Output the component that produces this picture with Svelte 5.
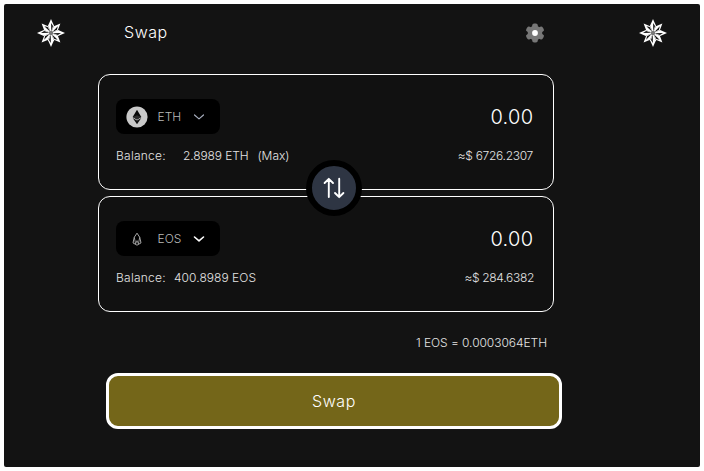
<script>
  const cards = [
    { token: 'ETH', balance: '2.8989 ETH', max: true, amount: '0.00', value: '≈$ 6726.2307' },
    { token: 'EOS', balance: '400.8989 EOS', max: false, amount: '0.00', value: '≈$ 284.6382' }
  ];
  const rays = [0, 45, 90, 135, 180, 225, 270, 315];
  const teeth = [0, 60, 120, 180, 240, 300];
</script>

{#snippet star()}
  <svg class="star" width="28" height="28" viewBox="-14 -14 28 28">
    {#each rays as angle, i}
      <g transform="rotate({angle}) scale({i % 2 ? 0.95 : 1})">
        <path d="M0-14L3-7.2L0 0L-3-7.2Z" fill="#fff" />
        <path d="M.1-10L2-6.9L.3-1.5Z" fill="#131313" />
      </g>
    {/each}
    <circle r="2.2" fill="#777" />
  </svg>
{/snippet}

<main class="app">
  <header>
    {@render star()}
    <h1>Swap</h1>
    <svg class="gear" width="20" height="20" viewBox="-10 -10 20 20">
      <g fill="#777">
        <circle r="7.3" />
        {#each teeth as angle}
          <rect x="-2.8" y="-9.5" width="5.6" height="6" rx="1.9" transform="rotate({angle})" />
        {/each}
      </g>
      <circle r="2.9" fill="#fff" />
    </svg>
    {@render star()}
  </header>

  <section class="cards">
    {#each cards as card}
      <article class="card">
        <div class="row top">
          <button class="token {card.token.toLowerCase()}">
            {#if card.token === 'ETH'}
              <svg width="22" height="22" viewBox="0 0 22 22">
                <circle cx="11" cy="11" r="10.6" fill="#c9c9c9" />
                <path d="M11 3.7L15.3 11L11 13.6L6.7 11Z" fill="#080808" />
                <path d="M11 9.2L15.3 11L11 13.6L6.7 11Z" fill="#2c2c2c" />
                <path d="M6.7 12L11 14.5L15.3 12L11 18.2Z" fill="#111" />
              </svg>
            {:else}
              <svg width="22" height="22" viewBox="0 0 22 22" fill="none" stroke="#c4c4c4" stroke-width=".85" stroke-linejoin="round">
                <path d="M11 5.2L8.3 9.2L7 14.9L11 17.2L15 14.9L13.7 9.2Z" />
                <path d="M8.3 9.4L9.6 15.8L11 12.6L12.4 15.8L13.7 9.4" stroke-width=".7" />
              </svg>
            {/if}
            <span>{card.token}</span>
            <svg class="chevron" width="12" height="8" viewBox="0 0 12 8" fill="none">
              <path d="M1.5 2L6 5.9L10.5 2" />
            </svg>
          </button>
          <span class="amount">{card.amount}</span>
        </div>
        <div class="row bottom">
          <span class="label">Balance:</span>
          <span class="balance" class:wide={card.max}>{card.balance}</span>
          {#if card.max}<span class="max">(Max)</span>{/if}
          <span class="value" class:short={!card.max}>{card.value}</span>
        </div>
      </article>
    {/each}
    <button class="flip" aria-label="Switch tokens">
      <svg width="44" height="44" viewBox="0 0 44 44" fill="none" stroke="#fff" stroke-width="1.9" stroke-linecap="round" stroke-linejoin="round">
        <path d="M16.8 31V13M12.6 17L16.8 12.8L21 17M27.2 12.8V31M23 27L27.2 31.2L31.4 27" />
      </svg>
    </button>
  </section>

  <p class="rate">1 EOS = 0.0003064ETH</p>
  <button class="submit"><span>Swap</span></button>
</main>

<style>
  :global(body) { margin: 0; background: #fff; }
  .app {
    box-sizing: border-box;
    width: 696px;
    height: 463px;
    margin: 4px;
    overflow: hidden;
    border-radius: 2px;
    background: #131313;
    color: #fff;
    font-family: Inter, "Liberation Sans", sans-serif;
    font-weight: 300;
  }
  button {
    box-sizing: border-box;
    margin: 0;
    padding: 0;
    border: 0;
    color: inherit;
    font: inherit;
  }
  svg { display: block; flex: none; }
  header {
    display: flex;
    align-items: center;
    height: 58px;
    padding: 0 33px 0 32.5px;
  }
  h1 {
    flex: 1;
    margin: -2px 0 0 59.5px;
    font-size: 16px;
    line-height: 20px;
    font-weight: 300;
    letter-spacing: .55px;
  }
  .gear { margin-right: 94.5px; }
  .cards {
    position: relative;
    display: flex;
    flex-direction: column;
    gap: 6px;
    width: 456px;
    margin: 12px 0 0 94px;
  }
  .card {
    box-sizing: border-box;
    height: 116px;
    padding: 24px 20px 0 17px;
    border: 1px solid #fff;
    border-radius: 12px;
    background: #111;
  }
  .row { display: flex; align-items: center; white-space: nowrap; }
  .top { height: 35px; justify-content: space-between; }
  .token {
    display: flex;
    align-items: center;
    width: 104px;
    height: 35px;
    padding-left: 9.5px;
    border-radius: 8px;
    background: #000;
    color: #b9b9b9;
    font-size: 12px;
  }
  .token span { width: 36px; margin-left: 10px; text-align: left; }
  .token .chevron { margin-left: -.5px; }
  .chevron { stroke: #a6adbd; stroke-width: 1.2; stroke-linecap: round; stroke-linejoin: round; }
  .eos .chevron { stroke: #fff; stroke-width: 1.6; }
  .amount { margin-right: -.3px; font-size: 20px; letter-spacing: .3px; }
  .bottom {
    height: 16px;
    margin-top: 13px;
    color: #e4e4e4;
    font-size: 12px;
  }
  .label { width: 50px; letter-spacing: .25px; }
  .balance { margin-left: 8px; letter-spacing: .05px; }
  .balance.wide { margin-left: 17px; letter-spacing: -.12px; }
  .max { margin-left: 9px; }
  .value { margin-left: auto; letter-spacing: -.3px; }
  .value.short { margin-right: -1px; }
  .flip {
    position: absolute;
    top: 86px;
    left: 208px;
    width: 56px;
    height: 56px;
    border: 6px solid #000;
    border-radius: 50%;
    background: #2e3543;
  }
  .rate {
    width: 543px;
    margin: 23px 0 0;
    color: #e4e4e4;
    font-size: 12px;
    line-height: 16px;
    letter-spacing: -.05px;
    text-align: right;
  }
  .submit {
    display: block;
    width: 456px;
    height: 56px;
    margin: 22px 0 0 102px;
    border: 3px solid #fff;
    border-radius: 12px;
    background: #746619;
    font-size: 16px;
    letter-spacing: .55px;
  }
</style>
